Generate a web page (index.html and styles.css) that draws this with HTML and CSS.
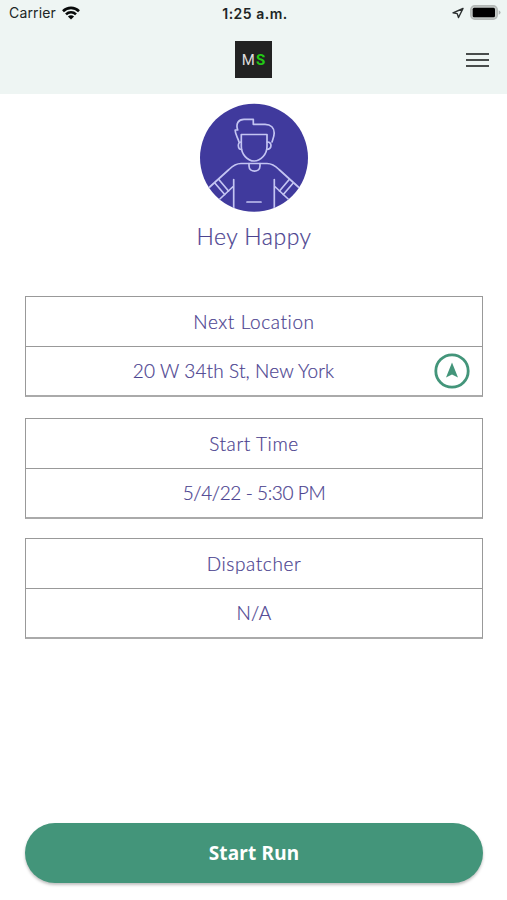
FILE: index.html
```html
<!DOCTYPE html>
<html lang="en">
<head>
    <meta charset="UTF-8">
    <meta name="viewport" content="width=device-width, initial-scale=1.0">
    <title>Start Run</title>
    <link rel="stylesheet" href="styles.css">
</head>
<body>

    <header class="header">
        <!-- Phone status bar -->
        <div class="status-bar">
            <div class="status-left">
                <span class="carrier">Carrier</span>
                <svg width="18" height="14" viewBox="0 0 18 14" fill="none" stroke="#080a0a" stroke-width="2.6">
                    <path d="M1 5.2C5.5 .8 12.5 .8 17 5.2"/>
                    <path d="M4 8.4C6.8 5.6 11.2 5.6 14 8.4"/>
                    <path d="M9 13.6L5.9 10.5Q9 8 12.1 10.5Z" fill="#080a0a" stroke="none"/>
                </svg>
            </div>
            <span class="clock">1:25 a.m.</span>
            <div class="status-right">
                <svg width="12" height="12" viewBox="0 0 12 12" fill="none" stroke="#2b2f2f" stroke-width="1.4" stroke-linejoin="round">
                    <path d="M11 1.5L1 5.8L5.2 6.6L6.5 10.5Z"/>
                </svg>
                <svg width="31" height="16" viewBox="0 0 31 16">
                    <rect x=".8" y=".8" width="26.4" height="13.4" rx="4" fill="#c3c8c6" stroke="#b3b8b6" stroke-width="1.5"/>
                    <rect x="2.7" y="2.8" width="22.3" height="9.4" rx="1.5" fill="#000"/>
                    <path d="M28.7 5.3Q30.6 6.1 30.6 7.5T28.7 9.7Z" fill="#aeb3b2"/>
                </svg>
            </div>
        </div>

        <div class="nav-bar">
            <div class="logo"><span>M</span><span class="logo-accent">S</span></div>
            <button class="menu-button" aria-label="Menu">
                <span></span>
                <span></span>
                <span></span>
            </button>
        </div>
    </header>

    <main class="container">
        <svg class="avatar" viewBox="0 0 108 108">
            <clipPath id="avatar-clip"><circle cx="54" cy="54.3" r="54"/></clipPath>
            <circle cx="54" cy="54.3" r="54" fill="#403a9d"/>
            <g clip-path="url(#avatar-clip)" fill="none" stroke="#c3c4f2" stroke-width="1.7" stroke-linejoin="round" stroke-linecap="round">
                <!-- Hair -->
                <path d="M39 38.5C38 34 35 31 35.2 26.5L37.7 26.5C35.5 20 38.5 15.8 44 15.8H53.3V20.8H65C71 20.800 74.200 24.500 74.200 29.500C74.200 33 73 35.500 72 38.500"/>
                <!-- Face and ears -->
                <path d="M41.3 31H67V43C67 50.500 61 57.500 54.200 57.500S41.300 50.500 41.300 43Z"/>
                <path d="M41 38.500C37.300 38.500 37.500 45.800 41.500 46M67.300 38.500C72.500 38.500 72 45.800 66.800 46"/>
                <!-- Shirt -->
                <path d="M49 60H60V62.500C60 69.300 49 69.300 49 62.500Z"/>
                <path d="M49 60H41C36 60 32.500 62.500 29 66L8 85M60 60H67C72 60 75.500 62.500 79 66L100 85"/>
                <path d="M33.700 76V108M74.300 76V108M33.700 82.500L14 101M74.300 82.500L94 101"/>
                <path d="M18.800 76L28.500 87.500M14.800 79.500L24.700 91M89.200 76L79.500 87.500M93.200 79.500L83.300 91"/>
                <path d="M47 98.500H61"/>
            </g>
        </svg>
        <h1 class="greeting">Hey Happy</h1>

        <section class="info-card">
            <h2 class="info-row">Next Location</h2>
            <div class="info-row location-row">
                <span class="address">20 W 34th St, New York</span>
                <button class="navigate-button" aria-label="Navigate">
                    <svg width="36" height="36" viewBox="0 0 36 36">
                        <circle cx="18" cy="18" r="16.2" fill="#fff" stroke="#43957a" stroke-width="2.8"/>
                        <path d="M18 9.5L24 24.500L18 21.500L12 24.500Z" fill="#43957a"/>
                    </svg>
                </button>
            </div>
        </section>

        <section class="info-card">
            <h2 class="info-row">Start Time</h2>
            <div class="info-row start-time">5/4/22 - 5:30 PM</div>
        </section>

        <section class="info-card">
            <h2 class="info-row">Dispatcher</h2>
            <div class="info-row">N/A</div>
        </section>

        <button class="start-button">Start Run</button>
    </main>

</body>
</html>
```
FILE: styles.css
```css
* {
    box-sizing: border-box;
}

body {
    margin: 0;
    height: 900px;
    display: flex;
    flex-direction: column;
    background-color: #fff;
    font-family: Lato, sans-serif;
    color: #4c4390;
}

button {
    border: none;
    padding: 0;
    background: none;
    cursor: pointer;
}

svg {
    display: block;
}

.header {
    height: 94px;
    background-color: #eef5f3;
}

.status-bar {
    height: 28px;
    padding: 0 6px 0 9px;
    display: grid;
    grid-template-columns: 1fr auto 1fr;
    align-items: center;
    font-family: Inter, sans-serif;
    font-size: 14px;
    line-height: 26px;
    color: #202525;
}

.status-left, .status-right {
    display: flex;
    align-items: center;
    gap: 6px;
    height: 26px;
    align-self: start;
}

.carrier {
    letter-spacing: 0.15px;
}

.status-right {
    justify-content: flex-end;
}

.clock {
    align-self: start;
    font-weight: 600;
    letter-spacing: 0.5px;
    padding-top: 1px;
}

.nav-bar {
    height: 64px;
    padding: 0 18px;
    display: grid;
    grid-template-columns: 1fr auto 1fr;
    align-items: center;
}

.logo {
    grid-column: 2;
    width: 37px;
    height: 37px;
    margin-bottom: 1px;
    display: flex;
    align-items: center;
    justify-content: center;
    gap: 1px;
    background-color: #222;
    color: #ddd;
    font-family: Roboto, sans-serif;
    font-size: 15px;
    font-weight: 400;
}

.logo-accent {
    color: #22c914;
    font-weight: 700;
}

.menu-button {
    justify-self: end;
    width: 23px;
    display: flex;
    flex-direction: column;
    gap: 4px;
}

.menu-button span {
    height: 2px;
    background-color: #484c4b;
}

.container {
    flex: 1;
    padding: 9px 24px 17px 25px;
    display: flex;
    flex-direction: column;
}

.avatar {
    width: 108px;
    height: 109px;
    align-self: center;
}

.greeting {
    margin: 9px 0 44px;
    font-size: 23px;
    font-weight: 300;
    line-height: 31px;
    letter-spacing: 0.5px;
    text-align: center;
    -webkit-text-stroke: 0.2px #4c4390;
}

.info-card {
    height: 101px;
    margin-bottom: 21px;
    border: 1px solid #999;
    border-bottom-width: 2px;
    border-bottom-color: #aaa;
}

.info-card + .info-card {
    margin-bottom: 19px;
}

.info-row {
    height: 47px;
    margin: 0;
    display: flex;
    align-items: center;
    justify-content: center;
    font-size: 19px;
    font-weight: 300;
    letter-spacing: 0.4px;
    -webkit-text-stroke: 0.2px #4c4390;
}

h2.info-row {
    height: 50px;
    border-bottom: 1px solid #999;
    letter-spacing: 0.6px;
}

.location-row {
    padding: 0 12px;
}

.address {
    flex: 1;
    padding-right: 5px;
    text-align: center;
    letter-spacing: 0.12px;
}

.start-time {
    letter-spacing: -0.4px;
}

.start-button {
    height: 60px;
    margin-top: auto;
    border-radius: 30px;
    background-color: #43957a;
    box-shadow: 0 2px 3px rgba(0, 0, 0, 0.25);
    color: #fff;
    font-family: "Noto Sans", sans-serif;
    font-size: 19px;
    font-weight: 700;
    letter-spacing: 0.2px;
}
```
